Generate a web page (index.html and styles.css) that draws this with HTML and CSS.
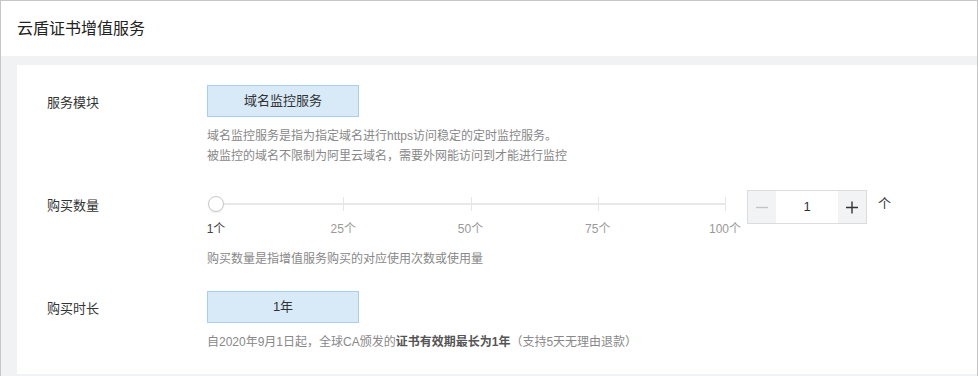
FILE: index.html
```html
<!DOCTYPE html>
<html lang="zh-CN">
<head>
    <meta charset="utf-8">
    <title>云盾证书增值服务</title>
    <link rel="stylesheet" href="styles.css">
</head>
<body>
    <div class="page">
        <div class="page-header">云盾证书增值服务</div>
        <div class="page-body">
            <div class="panel">
                <div class="row">
                    <div class="row-label">服务模块</div>
                    <div class="row-control">
                        <div class="option-btn">域名监控服务</div>
                        <p class="desc">域名监控服务是指为指定域名进行https访问稳定的定时监控服务。<br>被监控的域名不限制为阿里云域名，需要外网能访问到才能进行监控</p>
                    </div>
                </div>

                <div class="row row-amount">
                    <div class="row-label">购买数量</div>
                    <div class="row-control">
                        <div class="amount-line">
                            <div class="slider">
                                <div class="slider-rail">
                                    <span class="tick" style="left: 25%"></span>
                                    <span class="tick" style="left: 50%"></span>
                                    <span class="tick" style="left: 75%"></span>
                                    <span class="tick" style="left: 100%"></span>
                                    <span class="handle"></span>
                                </div>
                                <div class="slider-marks">
                                    <span class="mark mark-active" style="left: 0%">1个</span>
                                    <span class="mark" style="left: 25%">25个</span>
                                    <span class="mark" style="left: 50%">50个</span>
                                    <span class="mark" style="left: 75%">75个</span>
                                    <span class="mark" style="left: 100%">100个</span>
                                </div>
                            </div>
                            <div class="stepper">
                                <span class="step step-disabled">
                                    <svg width="14" height="14" viewBox="0 0 14 14"><path d="M1 7.5h12" stroke="#c4c4c4" stroke-width="1.4"/></svg>
                                </span>
                                <span class="step-value">1</span>
                                <span class="step">
                                    <svg width="14" height="14" viewBox="0 0 14 14"><path d="M1 7.5h12M7 1.5v12" stroke="#333" stroke-width="1.4"/></svg>
                                </span>
                            </div>
                            <span class="unit">个</span>
                        </div>
                        <p class="desc desc-amount">购买数量是指增值服务购买的对应使用次数或使用量</p>
                    </div>
                </div>

                <div class="row">
                    <div class="row-label">购买时长</div>
                    <div class="row-control">
                        <div class="option-btn">1年</div>
                        <p class="desc">自2020年9月1日起，全球CA颁发的<strong>证书有效期最长为1年</strong>（支持5天无理由退款）</p>
                    </div>
                </div>
            </div>
        </div>
    </div>
</body>
</html>
```

FILE: styles.css
```css
* {
    margin: 0;
    padding: 0;
    box-sizing: border-box;
}

body {
    font-family: "Liberation Sans", "Noto Sans CJK SC", sans-serif;
    color: #333;
    background: #fff;
}

.page {
    width: 978px;
    height: 376px;
    border: 1px solid #c6c6c6;
    display: flex;
    flex-direction: column;
}

.page-header {
    height: 55px;
    line-height: 55px;
    padding-left: 16px;
    font-size: 16px;
    color: #222;
    background: #fff;
}

.page-body {
    flex: 1;
    background: #f1f2f4;
    padding: 9px 0 4px 16px;
    display: flex;
}

.panel {
    flex: 1;
    background: #fff;
    padding: 20px 30px 0;
}

.row {
    display: flex;
    margin-bottom: 22px;
}

.row-label {
    width: 160px;
    font-size: 13px;
    line-height: 36px;
    color: #333;
}

.row-control {
    flex: 1;
}

.option-btn {
    width: 152px;
    height: 32px;
    line-height: 30px;
    text-align: center;
    font-size: 13px;
    color: #333;
    background: #d8e9f8;
    border: 1px solid #a8cdef;
}

.desc {
    margin-top: 9px;
    font-size: 12px;
    line-height: 20px;
    color: #888;
}

.desc strong {
    color: #555;
    font-weight: bold;
}

/* purchase amount */
.row-amount {
    margin-top: 20px;
}

.amount-line {
    display: flex;
    align-items: flex-start;
}

.slider {
    width: 530px;
    padding: 0 12px 0 9px;
    margin-right: 10px;
}

.slider-rail {
    position: relative;
    height: 32px;
}

.slider-rail::before {
    content: "";
    position: absolute;
    left: 0;
    right: 0;
    top: 15px;
    height: 2px;
    background: #e8e8e8;
}

.tick {
    position: absolute;
    top: 9px;
    width: 1px;
    height: 14px;
    background: #e6e6e6;
}

.handle {
    position: absolute;
    left: -8px;
    top: 8px;
    width: 16px;
    height: 16px;
    border-radius: 50%;
    background: #fff;
    border: 1px solid #c8c8c8;
    box-shadow: 0 1px 2px rgba(0, 0, 0, 0.08);
}

.slider-marks {
    position: relative;
    height: 18px;
}

.mark {
    position: absolute;
    top: 0;
    transform: translateX(-50%);
    font-size: 12px;
    line-height: 18px;
    color: #999;
    white-space: nowrap;
}

.mark-active {
    color: #444;
}

.stepper {
    display: flex;
    width: 120px;
    height: 34px;
    margin-top: 2px;
    border: 1px solid #dcdcdc;
}

.step {
    width: 28px;
    background: #f2f3f5;
    display: flex;
    align-items: center;
    justify-content: center;
}

.step-value {
    flex: 1;
    text-align: center;
    line-height: 32px;
    font-size: 13px;
    color: #333;
}

.unit {
    margin-left: 11px;
    font-size: 13px;
    line-height: 32px;
    color: #333;
}

.desc-amount {
    margin-top: 11px;
}
```
